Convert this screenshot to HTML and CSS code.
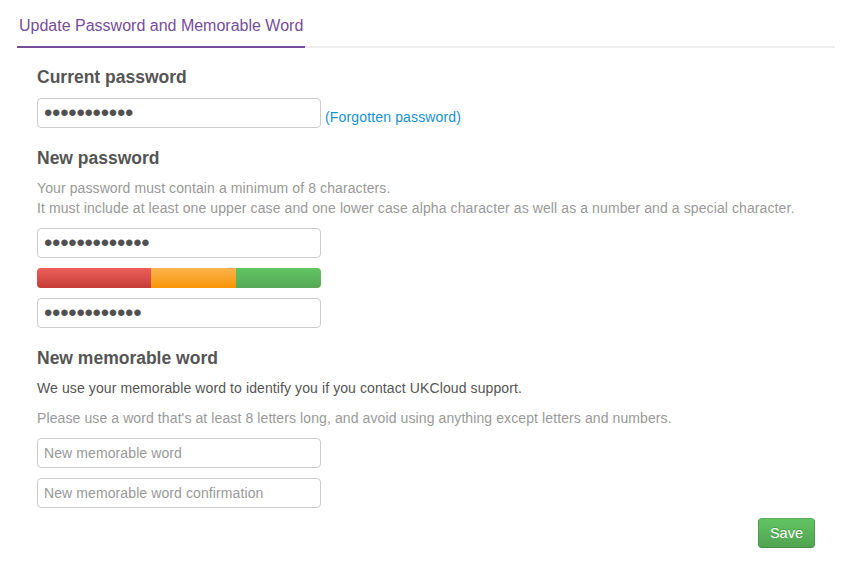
FILE: index.html
```html
<!DOCTYPE html>
<html>
<head>
<meta charset="utf-8">
<link rel="stylesheet" href="styles.css">
</head>
<body>
<div class="page">
  <div class="tabs">
    <a class="tab active">Update Password and Memorable Word</a>
  </div>
  <form class="form">
    <h4 class="heading first">Current password</h4>
    <div class="row">
      <input class="field" type="password" value="abcdefghijk">
      <a class="link">(Forgotten password)</a>
    </div>

    <h4 class="heading">New password</h4>
    <p class="help">Your password must contain a minimum of 8 characters.<br>It must include at least one upper case and one lower case alpha character as well as a number and a special character.</p>
    <input class="field" type="password" value="abcdefghijklm">
    <div class="strength">
      <div class="seg seg-red"></div>
      <div class="seg seg-orange"></div>
      <div class="seg seg-green"></div>
    </div>
    <input class="field" type="password" value="abcdefghijkl">

    <h4 class="heading">New memorable word</h4>
    <p class="text">We use your memorable word to identify you if you contact UKCloud support.</p>
    <p class="help">Please use a word that's at least 8 letters long, and avoid using anything except letters and numbers.</p>
    <input class="field" type="text" placeholder="New memorable word">
    <input class="field" type="text" placeholder="New memorable word confirmation">
    <div class="actions">
      <button class="btn-save" type="button">Save</button>
    </div>
  </form>
</div>
</body>
</html>
```

FILE: styles.css
```css
html, body {
  margin: 0;
  padding: 0;
  background: #fff;
}
body {
  font-family: "Liberation Sans", Arial, sans-serif;
  font-size: 14px;
  line-height: 20px;
  color: #555;
}
.page {
  padding: 0 23px 0 17px;
}
.tabs {
  display: flex;
  border-bottom: 2px solid #eeeeee;
}
.tab {
  display: block;
  font-size: 16px;
  line-height: 20px;
  color: #764d9b;
  padding: 16px 2px 10px 2px;
  border-bottom: 2px solid #764d9b;
  margin-bottom: -2px;
  text-decoration: none;
}
.form {
  display: flex;
  flex-direction: column;
  align-items: flex-start;
  padding: 0 20px;
  margin: 0;
}
.heading {
  margin: 20px 0 0 0;
  font-size: 17.5px;
  line-height: 20px;
  font-weight: bold;
  color: #555;
}
.heading.first {
  margin-top: 19px;
}
.row {
  display: flex;
  align-items: flex-end;
  margin-top: 11px;
}
.row .field {
  margin-top: 0;
}
.link {
  color: #1592d4;
  margin-left: 4px;
  line-height: 20px;
  padding-bottom: 1px;
  letter-spacing: 0.15px;
  cursor: pointer;
}
.field {
  box-sizing: border-box;
  width: 284px;
  height: 30px;
  margin: 10px 0 0 0;
  padding: 4px 6px;
  border: 1px solid #cccccc;
  border-radius: 4px;
  font-family: "Liberation Sans", Arial, sans-serif;
  font-size: 14px;
  line-height: 20px;
  letter-spacing: 0.1px;
  color: #555;
  background: #fff;
  outline: none;
}
.field[type="password"] {
  font-size: 24px;
  letter-spacing: -0.3px;
  padding: 0 6px;
  color: #505050;
}
.field::placeholder {
  color: #999;
}
.help {
  margin: 10px 0 0 0;
  color: #999;
  letter-spacing: 0.1px;
}
.text {
  margin: 10px 0 0 0;
  color: #555;
  letter-spacing: 0.1px;
}
.strength {
  display: flex;
  width: 284px;
  height: 20px;
  margin-top: 10px;
  border-radius: 4px;
  overflow: hidden;
}
.seg {
  height: 100%;
}
.seg-red {
  width: 40%;
  background: linear-gradient(to bottom, #ee5f5b, #c43c35);
}
.seg-orange {
  width: 30%;
  background: linear-gradient(to bottom, #fbb450, #f89406);
}
.seg-green {
  width: 30%;
  background: linear-gradient(to bottom, #62c462, #57a957);
}
.actions {
  align-self: stretch;
  display: flex;
  justify-content: flex-end;
  margin-top: 10px;
}
.btn-save {
  font-family: "Liberation Sans", Arial, sans-serif;
  font-size: 14.5px;
  line-height: 20px;
  padding: 4px 11px;
  color: #fff;
  border: 1px solid #4cae4c;
  border-color: #5aad5a #4a9a4a #428c42;
  border-radius: 4px;
  background: linear-gradient(to bottom, #62c462, #51a351);
  text-shadow: 0 -1px 0 rgba(0,0,0,0.2);
  cursor: pointer;
}
```
